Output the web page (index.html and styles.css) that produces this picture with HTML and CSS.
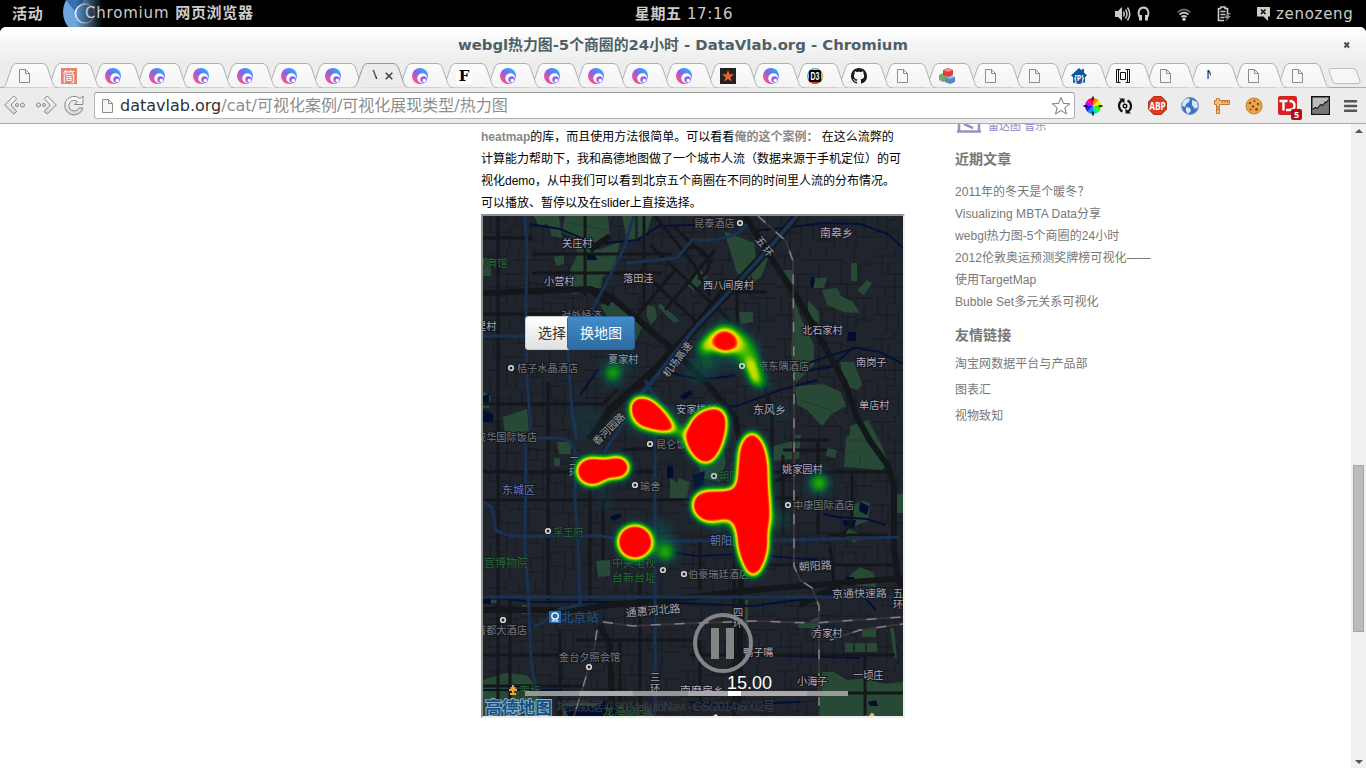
FILE: index.html
```html
<!DOCTYPE html>
<html lang="zh-CN">
<head>
<meta charset="utf-8">
<title>webgl热力图-5个商圈的24小时 - DataVlab.org</title>
<link rel="stylesheet" href="styles.css">
</head>
<body>
<svg class="defs" width="0" height="0" aria-hidden="true">
  <defs>
    <linearGradient id="orbFill" x1="1" y1="0" x2="0" y2="1"><stop offset=".15" stop-color="#27a8ff"/><stop offset=".5" stop-color="#8a62e8"/><stop offset=".85" stop-color="#ff4f8b"/></linearGradient>
    <linearGradient id="tabFill" x1="0" y1="0" x2="0" y2="1"><stop offset="0" stop-color="#fcfcfc"/><stop offset="1" stop-color="#f3f3f3"/></linearGradient>
    <linearGradient id="navFill" x1="0" y1="0" x2="0" y2="1"><stop offset="0" stop-color="#fff"/><stop offset="1" stop-color="#d4d4d4"/></linearGradient>
    <symbol id="page" viewBox="0 0 16 16"><path d="M2.500 1.500h6l4 4v9h-10zM8.500 1.500v4h4" fill="#f8f8f8" stroke="#8b8b8b"/></symbol>
    <symbol id="orb" viewBox="0 0 16 16"><circle cx="8" cy="8" r="8" fill="url(#orbFill)"/><circle cx="10.300" cy="10.300" r="5" fill="#fff"/><circle cx="11.600" cy="11.600" r="3.300" fill="#8f62e6"/><circle cx="12.300" cy="12.600" r="1.800" fill="#fff"/></symbol>
    <symbol id="jian" viewBox="0 0 16 16"><rect width="16" height="16" fill="#e78171"/><text x="8" y="13" text-anchor="middle" font-size="13" fill="#fff" class="cjk">简</text></symbol>
    <symbol id="eff" viewBox="0 0 16 16"><rect width="16" height="16" fill="#fff"/><text x="8" y="13" text-anchor="middle" font-size="15" class="serif">F</text></symbol>
    <symbol id="star" viewBox="0 0 16 16"><rect width="16" height="16" fill="#222"/><path d="M8 2l1.500 4.300 4.500.1-3.600 2.800 1.300 4.400L8 11l-3.700 2.600 1.300-4.400L2 6.400l4.500-.1z" fill="#e8622c"/></symbol>
    <symbol id="d3" viewBox="0 0 16 16"><circle cx="8" cy="8" r="7.300" fill="none" stroke="#3fa7c9" stroke-width="1.300"/><path d="M1.500 11a7.300 7.300 0 0 0 13 0" fill="none" stroke="#e53b2c" stroke-width="1.800"/><path d="M14.500 5a7 7 0 0 1 .5 5" fill="none" stroke="#e8b02c" stroke-width="1.500"/><rect x="2" y="2" width="12" height="12" rx="1.500"/><text x="8" y="11.700" text-anchor="middle" font-size="10" textLength="9" lengthAdjust="spacingAndGlyphs" fill="#fff" class="narrow">D3</text></symbol>
    <symbol id="github" viewBox="0 0 16 16"><path fill="#191717" d="M8 0C3.580 0 0 3.580 0 8c0 3.540 2.290 6.530 5.470 7.590.4.070.55-.17.55-.38 0-.19-.01-.82-.01-1.490-2.010.37-2.530-.49-2.690-.94-.09-.23-.48-.94-.82-1.130-.28-.15-.68-.52-.01-.53.63-.01 1.080.58 1.230.82.72 1.210 1.870.87 2.330.66.070-.52.28-.87.51-1.070-1.780-.2-3.640-.89-3.640-3.950 0-.87.31-1.590.82-2.150-.08-.2-.36-1.020.08-2.120 0 0 .67-.21 2.200.82.64-.18 1.320-.27 2-.27s1.360.09 2 .27c1.530-1.040 2.200-.82 2.200-.82.44 1.100.16 1.920.08 2.120.51.56.82 1.270.82 2.150 0 3.070-1.870 3.750-3.650 3.950.29.25.54.73.54 1.480 0 1.070-.01 1.930-.01 2.200 0 .21.15.46.55.38A8 8 0 0 0 16 8c0-4.420-3.580-8-8-8z"/></symbol>
    <symbol id="cubes" viewBox="0 0 16 16"><path d="M0 7l4-2 3 2v6l-3 1-4-2z" fill="#6fae6f"/><path d="M6 9l5-2 5 2v5l-5 2-5-2z" fill="#5b86c4"/><path d="M6 9l5-2 5 2-5 2z" fill="#9cbbe2"/><path d="M4 2l5-2 5 2v5l-5 2-5-2z" fill="#dc4040"/><path d="M4 2l5-2 5 2-5 2z" fill="#f48a84"/></symbol>
    <symbol id="house" viewBox="0 0 16 16"><path d="M8 0l3 2.600V1h2v3.500L16 7.500 14 9v5.500L8 16l-6-1.500V9L0 7.500z" fill="#0d56a0"/><text x="8" y="12.500" text-anchor="middle" font-size="9" textLength="10" lengthAdjust="spacingAndGlyphs" fill="#fff" class="bold">{P}</text></symbol>
    <symbol id="brackets" viewBox="0 0 16 16"><path d="M4 1.500H1.500v13H4M5.500 1.500h-2v13h2M12 1.500h2.500v13H12M10.500 1.500h2v13h-2M5.500 4.500h5v7h-5z" fill="none" stroke="#111"/></symbol>
  </defs>
</svg>

<header class="topbar">
  <div class="activities">活动</div>
  <div class="app">
    <svg class="app-logo" width="42" height="27" viewBox="0 0 42 27"><defs><linearGradient id="fade"><stop offset=".3" stop-color="#000" stop-opacity="0"/><stop offset=".95" stop-color="#000"/></linearGradient></defs><circle cx="24" cy="12" r="24" fill="#6fa5dd"/><path d="M3 0h18l-7 14z" fill="#376fae"/><circle cx="22" cy="13.500" r="9.500" fill="#5b93d3" stroke="#e8f0fa" stroke-width="1.600"/><rect width="42" height="27" fill="url(#fade)"/></svg>
    <span class="app-name"><span class="app-latin">Chromium</span> 网页浏览器</span>
  </div>
  <div class="clock"><b>星期五</b> 17:16</div>
  <div class="tray">
    <svg width="36" height="16" viewBox="0 0 36 16" fill="none" stroke="#ccc" stroke-width="1.500"><path d="M0 5h3l4-4v14l-4-4H0z" fill="#ccc" stroke="none"/><path d="M8.500 5.500q1.500 2.500 0 5M10.500 3.500q3 4.500 0 9M12.500 1.500q4.500 6.500 0 13"/><path d="M25 12c-3-5-1-10.500 3.500-10.500S35 7 32 12" stroke-width="1.800"/><path d="M25.500 9v5.500M31.500 9v5.500" stroke-width="3"/></svg>
    <svg width="16" height="16" viewBox="0 0 16 16" fill="none" stroke-width="1.700"><path d="M1.500 6.500q6.500-6 13 0" stroke="#666"/><path d="M3.500 8.700q4.500-4 9 0M5.500 11q2.500-2 5 0" stroke="#ccc"/><circle cx="8" cy="13.300" r="1.700" fill="#ccc"/></svg>
    <svg width="15" height="16" viewBox="0 0 15 16"><path d="M4 2.500V1h4v1.500h2.500V8M7 14.500H1.500v-12H4" fill="none" stroke="#ccc" stroke-width="1.600"/><path d="M3.500 5.500h5M3.500 8.500h5M3.500 11.500h4" stroke="#ccc" stroke-width="1.500"/><path d="M11 7l-4 5h3l-2 4 6-6h-3l3-3z" fill="#888"/></svg>
    <svg width="15" height="16" viewBox="0 0 15 16"><path d="M1 1h13v9.500h-2V15l-4.500-4.500H1z" fill="#ccc"/><path d="M5 3.500l4.500 4.500M9.500 3.500L5 8" stroke="#111" stroke-width="1.700"/></svg>
    <span class="user">zenozeng</span>
  </div>
</header>

<div class="window">
  <div class="titlebar">
    <span class="title">webgl热力图-5个商圈的24小时 - DataVlab.org - Chromium</span>
    <svg class="win-close" width="8" height="8" viewBox="0 0 8 8"><path d="M1.500 1.500l4.500 5M6 1.500l-4.500 5" stroke="#44545c" stroke-width="2.200"/></svg>
  </div>
  <nav class="tabs" id="tabs"></nav>
  <div class="toolbar">
    <svg class="nav" width="88" height="24" viewBox="0 0 88 24" fill="url(#navFill)" stroke="#858585"><path d="M0.700 12l9-9 3 2.500L7 12l5.700 6.500-3 2.500z"/><circle cx="13" cy="12" r="1.500"/><circle cx="18.500" cy="12" r="2"/><path d="M52.300 12l-9-9-3 2.500L46 12l-5.700 6.500 3 2.500z"/><circle cx="40" cy="12" r="1.500"/><circle cx="34.500" cy="12" r="2"/><path d="M79 3v8.500h-8.500l3-3a5.300 5.300 0 1 0 1.500 6.500h4a9.300 9.300 0 1 1-3-9.500z"/></svg>
    <div class="omnibox">
      <svg width="16" height="16"><use href="#page"/></svg>
      <span class="url"><b>datavlab.org</b>/cat/可视化案例/可视化展现类型/热力图</span>
      <svg width="20" height="20" viewBox="0 0 20 20"><path d="M10 1.500l2.400 6 6.400.3-5 4 1.700 6.200L10 14.500 4.500 18l1.700-6.200-5-4 6.400-.3z" fill="#fff" stroke="#777"/></svg>
    </div>
    <div class="extensions">
      <svg width="20" height="20" viewBox="0 0 20 20"><g transform="translate(10 10)"><path d="M0 0V-8A8 8 0 0 1 5.700-5.700z" fill="#ff8a00"/><path d="M0 0L5.700-5.700A8 8 0 0 1 8 0z" fill="#e6f000"/><path d="M0 0H8A8 8 0 0 1 5.700 5.700z" fill="#30f000"/><path d="M0 0L5.700 5.700A8 8 0 0 1 0 8z" fill="#00e8b0"/><path d="M0 0V8A8 8 0 0 1-5.700 5.700z" fill="#0090ff"/><path d="M0 0L-5.700 5.700A8 8 0 0 1-8 0z" fill="#2020ff"/><path d="M0 0H-8A8 8 0 0 1-5.700-5.700z" fill="#d000ff"/><path d="M0 0L-5.700-5.700A8 8 0 0 1 0-8z" fill="#ff0050"/><path d="M0-9.500v4M0 9.500v-4M-9.500 0h4M9.500 0h-4" stroke="#000" stroke-width="1.500"/></g></svg>
      <svg width="16" height="18" viewBox="0 0 16 18" fill="none" stroke="#111" stroke-width="2.200"><path d="M5 3.500A6.300 6.300 0 0 0 5.500 14.500M11 14.500A6.300 6.300 0 0 0 10.500 3.500"/><path d="M2 1.500h5.500v5zM14 16.500H8.500v-5z" fill="#111" stroke="none"/><circle cx="8" cy="9" r="1.800" stroke-width="1.400"/></svg>
      <svg width="19" height="19" viewBox="0 0 19 19"><path d="M5.700.5h7.600l5.200 5.200v7.600l-5.200 5.200H5.700L.5 13.300V5.700z" fill="#d93a20" stroke="#b8301a"/><text x="9.500" y="13.500" text-anchor="middle" font-size="11" textLength="16.500" lengthAdjust="spacingAndGlyphs" fill="#fff" class="bold">ABP</text></svg>
      <svg width="18" height="18" viewBox="0 0 18 18"><circle cx="9" cy="9" r="8.500" fill="#3d73c4" stroke="#7f96bd"/><path d="M2 4q4-4 7-2l-1 3-3 2-1 3-3-1zM11 3l5 2 1 5-3 2-3-4zM5 10l4 1 1 3-3 3-2-3z" fill="#dbe6f5"/></svg>
      <svg width="18" height="18" viewBox="0 0 18 18"><path d="M3.500 1.500h3v2h10v4h-10v9h-3v-9h-2v-4h2z" fill="#f1bd7b" stroke="#c57a36"/><path d="M9.500 4v1.500M12 4v1.500M14.500 4v1.500M4 10h1.500M4 12.500h1.500" stroke="#8d5522"/></svg>
      <svg width="18" height="18" viewBox="0 0 18 18"><circle cx="9" cy="9" r="8" fill="#e9a54b" stroke="#c57f2b"/><g fill="#8a4a16"><circle cx="5" cy="6" r="1.200"/><circle cx="9.500" cy="4" r="1"/><circle cx="13" cy="7" r="1.300"/><circle cx="8" cy="9.500" r="1.200"/><circle cx="5.500" cy="12.500" r="1.100"/><circle cx="11.500" cy="12.500" r="1.400"/></g></svg>
      <svg width="24" height="24" viewBox="0 0 24 24"><rect x="0" y="0" width="19" height="19" rx="2" fill="#d92020"/><path d="M1.500 5h8M5.500 5v9.500M8 14h3.500q5 0 5-4.500t-5-4.500" fill="none" stroke="#fff" stroke-width="2.400"/><rect x="13" y="13" width="11" height="11" rx="2" fill="#b30c12"/><text x="18.500" y="22" text-anchor="middle" font-size="9" fill="#fff" class="bold">5</text></svg>
      <svg width="19" height="19" viewBox="0 0 19 19"><rect x=".75" y=".75" width="17.500" height="17.500" fill="#b9bcbf" stroke="#111" stroke-width="1.500"/><path d="M1.500 13.500l3-2 2 1 3-4 2 1 3-3.500 1 .5 2-3V17.500H1.500z" fill="#777"/><path d="M1.500 13.500l3-2 2 1 3-4 2 1 3-3.500 1 .5 2-3" fill="none" stroke="#222" stroke-width="1.200"/></svg>
      <svg width="14" height="14" viewBox="0 0 14 14"><path d="M1 2.200h11M1 7h11M1 11.800h11" stroke="#555" stroke-width="2.600" stroke-linecap="round"/></svg>
    </div>
  </div>
</div>

<div class="viewport">
  <main class="article">
    <p><a>heatmap</a>的库，而且使用方法很简单。可以看看<a>俺的这个案例：</a> 在这么流弊的<br>计算能力帮助下，我和高德地图做了一个城市人流（数据来源于手机定位）的可<br>视化demo，从中我们可以看到北京五个商圈在不同的时间里人流的分布情况。<br>可以播放、暂停以及在slider上直接选择。</p>
    <div class="map">
      <svg width="420" height="500" viewBox="483 216 420 500">
        <defs>
          <pattern id="streets" width="97" height="83" patternUnits="userSpaceOnUse"><path d="M0 7h22v-7M9 7v18h34V11h22l6 4h26M22 25v29h-8v29M0 38h31l12-3h54M43 25v20h15v38M31 38v18l-6 6v21M12 38v9h10M43 34h9v11M34 11V0M26 11h17M15 12v13M50 0v11M65 11v24M78 0v15M84 15v20M71 35v14h26M58 54h22v29M0 66h25M31 60h27M66 54v14h14M88 49v22h9M80 71h8M37 60v14h21M5 47v19M46 60v14M71 68v15" fill="none" stroke="#14171c" stroke-width=".8"/></pattern>
          <filter id="heat" x="483" y="216" width="420" height="500" filterUnits="userSpaceOnUse" color-interpolation-filters="sRGB">
            <feGaussianBlur stdDeviation="4.300"/>
            <feColorMatrix values="0 0 0 1 0 0 0 0 1 0 0 0 0 1 0 0 0 0 1 0"/>
            <feComponentTransfer>
              <feFuncR type="table" tableValues="0 0 0 .15 .7 1 1 1 1 1 1"/>
              <feFuncG type="table" tableValues=".4 .45 .6 .72 .85 .85 .2 0 0 0 0"/>
              <feFuncB type="table" tableValues=".5 .4 .1 0 0 0 0 0 0 0 0"/>
              <feFuncA type="table" tableValues="0 .3 .7 .95 1 1 1 1 1 1 1"/>
            </feComponentTransfer>
          </filter>
        </defs>
        <rect x="483" y="216" width="420" height="500" fill="#20242c"/>
        <rect x="483" y="216" width="420" height="500" fill="url(#streets)"/>
        <g fill="#284936">
          <path d="M534 216h25l3 22-10-2-4-12-9 2zM565 216h43l2 22-14 6 2 6 22-8-6 26-14 12-10-4-3 10-10 8-8-1v-20l8-18-2-17-13-6z"/>
          <path d="M622 216h13v26l-8-2zM638 216h14l-6 20-8 2zM554 257l10-3v10l-8 2zM582 274h11l10-4-2 18-18 0zM483 258h8v18h-8zM647 305l8 2 2 10-6 8-4-8zM600 305l16-4 14 12 12 14-6 14-20-10z"/>
          <path d="M724 231l30 12 3 22-8 14-12-6zM700 270l8 6-14 15-6-5zM752 258h16l-6 18-10 8zM780 270h14l-2 20zM739 312h14v10l-12 2zM815 278h12l-3 10h-12zM822 290l15-2 4 8 12 6 7 11-17-1-16-7zM851 263h6v18h-6zM857 290l10-10 5 3-8 12zM808 300l10 10 2 14-12-8zM794 300l8 20 12 25v20l-18 18-5-30z"/>
          <path d="M840 362h14l8 22-4 6-14-4zM795 386l28-2 18 8 5 14-14 8-10 12-15-16-10-5zM850 426l18-6 12 22 8 20-6 8-38-3 2-30 4-2zM827 448l10 2-2 8-9-2zM795 435h6l-2 24h-5z"/>
          <path d="M770 447l22-6v18l-20 2zM700 412l8-4 10 14 8 40-6 20-18-4-4-14zM678 478l12 4-4 20-8-2zM670 478l16 10-2 12-14-2zM503 417l24-8 2 22-8 6-16-2zM557 442h14v12h-12zM554 458h6v8h-6zM483 392l8 4-2 12h-6z"/>
          <path d="M596 561l14-1v16l-12 1zM483 600h15v3h-15zM522 605h5v9h-5zM483 680l22-7 22 2 12 16 0 25h-56zM565 703h48l14 8 20-4 8 9H562zM822 672h12l14 8 20-2 14 6 21-2v34h-84zM850 575l10-8 14 6 2 14-26-2zM852 505l10-4 8 2-2 18-16 6zM862 629h14v8h-14zM845 643h8v9h-8zM855 643h10v9h-10zM867 643h10v9h-10zM869 683h16v8h-16zM896 495l7-2v20h-7zM842 533l6-4 14 6-8 8z"/>
          <path d="M727 340h14v8h-10zM525 340v6h40v-3h-36zM660 303l20 18-6 2-16-16zM745 600h3v30h-3zM811 620l8-4v24l-8-4zM798 624h14v4h-14zM890 628l4 0 3 30-3 0z"/>
        </g>
        <g fill="none" stroke="#203a2c" stroke-width="1"><path d="M495 684q14-6 24 2l6 28M490 694q10-8 20 0M800 400l30 10 16 20M845 440h36M852 452a8 8 0 1 0 1 0M566 222l40 8M576 250l34 8"/></g>
        <g fill="#020d30"><path d="M587 254h8l2 6h-10zM483 396l6-2v10l-6-2zM483 410l10 4 0 8h-10zM667 466h6v12h-6zM610 517l10-4 2 4-9 4zM848 332h8v9h-9zM815 278l-2 12-3-6 2-8zM680 396l10-6 2 4-8 6zM845 577h9l2 8-6 1zM860 502l9 4-2 9-8-4zM842 520h14l-2 8-10-2zM564 706h30l14-6 12 8-2 8h-50zM693 475l12-4-2 14-8 8zM868 702l8-2 2 6h-8zM483 596h8v8h-8z"/></g>
        <g fill="none" stroke="#05103a" stroke-width="2">
          <path d="M530 224l30 5 35 15 42-4 22-14 36-1M750 231l24-2 50-6 36 1 28 10 15 14M483 470q8 4 14 0M808 363l30-10 18-5 24 4 23 12M800 372l30-5 20-16M690 415l50-10 40-15 38-10M665 370q30 14 70 5"/>
          <path d="M580 395l10-14 8-12M622 450l90-6M823 514l14 3 30 2 18 6M483 596l50 6h120l100 4 60-8 45-8 18 20M483 690h80M760 655l100 3M660 550l36 6 50-2 72 6M690 702l30 3 80-3"/>
        </g>
        <g fill="none" stroke="#13171a" stroke-width="3">
          <path d="M483 238h50M532 254h140M532 273h130M483 314h90M498 216v180M498 395v320M548 382v220M644 216v90M655 216l40 50 15 30M483 404h120l15-15M483 472h175M483 500h176l140-2M660 406v40M585 216v80M737 290v50M737 292h30M483 655h100M483 686h100M510 600v116M560 630v86M575 640h120M620 640v76M640 580v136M622 450l80-5M700 640v70M734 470v246"/>
          <path d="M640 270l60 55M650 245l40 38 40 38M672 225l40 38M665 310l50-60M690 330l40-50M625 330l50-60M680 255q16-16 26 0q8 16-8 24M783 455v80M818 440v95M840 540l12-20V470M790 440h40M783 450h44M765 485l45-18M770 472h120M690 655h205M740 565h160M700 540v50M830 545l4 40M828 535h60M865 655v60M845 693h58M762 380l10 30v60l0 75M590 460v140M603 500v60"/>
        </g>
        <g fill="none" stroke="#13171a" stroke-width="6"><path d="M483 293l107-4 20 7 60 51 40 40 25 30 6 30v120l-2 140M590 290l20 14M745 216l25 40 30 46 30 54 15 27 12 34 13 24 18 25 6 20v60l3 30 10 22M590 250l20-14M600 625l10 20 2 60M483 610h100l20-4 100-10 50-6 150-12M800 605l40-20"/></g>
        <path d="M590 440l20-30 45-40 40-42 60-64 42-48" fill="none" stroke="#13171a" stroke-width="8"/>
        <g fill="none" stroke="#193253" stroke-width="3">
          <path d="M525 216l2 34-1 60 1 70 4 50M526 440l-1 110 3 40 3 70 5 30 15 26M634 216l-10 32-14 28-20 38M626 263l51-5 17-20M483 336h45M568 352q-2-16 10-22M568 352l4 60 5 28M483 438h74q15 0 18 14l0 50 3 40 2 63-20 4-18 14-8 3M483 502l9 5 4 24 14 5 90 0 44 6 30-1h80l80-2 66-2M483 597h420M655 420v296M695 240q40 2 52-16M645 380q10 20 25 30M604 452l20-30"/>
          <path d="M640 396l55-68 60-64 42-48" stroke-width="4"/>
        </g>
        <g fill="none" stroke="#3d3335" stroke-width="2"><path id="railA" d="M758 216l28 25 7 20 1 120v185l6 14 12 8 7 18v100"/><path id="railB" d="M603 622l30 4 40-2 80-3 60 2 90-6M597 630l-3 20-12 40-8 26M830 640l30-10 43-6"/></g>
        <g fill="none" stroke="#80808c" stroke-width="1.500" stroke-dasharray="10 14"><use href="#railA"/><use href="#railB"/></g>

        <g class="labels">
          <text x="562" y="247">关庄村</text><text x="544" y="285">小营村</text><text x="623" y="282">落田洼</text><text x="703" y="289">西八间房村</text><text x="820" y="237" class="wide">南皋乡</text><text x="802" y="334">北石家村</text><text x="856" y="366">南岗子</text><text x="859" y="409">单店村</text><text x="753" y="414" class="wide">东风乡</text><text x="676" y="413">安家楼村</text><text x="782" y="473">姚家园村</text><text x="608" y="363">夏家村</text><text x="476" y="330">里村</text><text x="812" y="637">方家村</text><text x="743" y="656">鸭子嘴</text><text x="797" y="685">小海子</text><text x="853" y="679">一顷庄</text><text x="680" y="695" class="wide">南磨房乡</text>
        </g>
        <g class="labels dim">
          <text x="561" y="319">对外经济</text><text x="694" y="227">昆泰酒店</text><text x="517" y="372">桔子水晶酒店</text><text x="748" y="370">北京东隅酒店</text><text x="476" y="441">汉华国际饭店</text><text x="656" y="448">昆仑饭店</text><text x="640" y="490">瑜舍</text><text x="793" y="509">中康国际酒店</text><text x="688" y="578">伯豪瑞廷酒店</text><text x="559" y="661">金台夕照会馆</text><text x="476" y="634">首都大酒店</text>
        </g>
        <g class="labels road">
          <text transform="translate(762 242) rotate(50)" x="-6" y="4">五</text><text transform="translate(769 252) rotate(50)" x="-6" y="4">环</text><text transform="translate(668 378) rotate(-53)">机场高速</text><text transform="translate(597 446) rotate(-45)">香河园路</text><text x="569" y="465">二</text><text x="569" y="476">环</text><text transform="translate(626 617) rotate(-5)" class="wide">通惠河北路</text><text transform="translate(799 571) rotate(-4)" class="wide">朝阳路</text><text transform="translate(832 598) rotate(-1)" class="wide">京通快速路</text><text x="893" y="597">五</text><text x="893" y="608">环</text><text x="733" y="616">四</text><text x="733" y="627">环</text><text x="650" y="681">三</text><text x="650" y="692">环</text>
        </g>
        <g class="labels green"><text x="477" y="267">体育馆</text><text x="553" y="536">孚王府</text><text x="484" y="567" class="wide">宫博物院</text><text x="612" y="567" class="wide">中央电视</text><text x="612" y="582" class="wide">台新台址</text><text x="519" y="695" class="wide">天坛</text><text x="603" y="715" class="wide">龙潭公园</text><text x="719" y="480">朝阳</text></g>
        <g class="labels district"><text x="502" y="494">东城区</text><text x="710" y="545">朝阳区</text></g>
        <text x="561" y="622" class="station">北京站</text>
        <rect x="549" y="611" width="12" height="12" fill="#2a6bb0"/><path d="M552.500 621l2-3M557.500 621l-2-3M551.500 621h7" stroke="#fff"/><circle cx="555" cy="616" r="3.200" fill="none" stroke="#fff" stroke-width="1.300"/>
        <text x="557" y="711" class="notice" textLength="218">地图数据 © 2014 AutoNavi - GS(2014)6002号</text>
        <text x="485" y="714" class="brand">高德地图</text>
        <g fill="#222" stroke="#d9d9d9" stroke-width="1.600"><circle cx="740" cy="223" r="2.300"/><circle cx="511" cy="368" r="2.300"/><circle cx="650" cy="444" r="2.300"/><circle cx="635" cy="485" r="2.300"/><circle cx="714" cy="476" r="2.300"/><circle cx="788" cy="505" r="2.300"/><circle cx="548" cy="531" r="2.300"/><circle cx="663" cy="570" r="2.300"/><circle cx="684" cy="574" r="2.300"/><circle cx="503" cy="620" r="2.300"/><circle cx="589" cy="667" r="2.300"/></g>
        <path d="M509 690h8M513 685v10M510.500 688h5M510 694h6" stroke="#f0a030" stroke-width="2"/><path d="M869 716l2-3 2 0 2 3z" fill="#f0b030"/><path d="M713 716l3-2 2 2z" fill="#eee"/>

        <g filter="url(#heat)">
          <g fill-opacity=".1"><ellipse cx="728" cy="350" rx="34" ry="20"/><ellipse cx="700" cy="370" rx="15" ry="13"/><ellipse cx="612" cy="372" rx="13" ry="16"/><circle cx="662" cy="530" r="10"/><ellipse cx="728" cy="523" rx="22" ry="10"/><ellipse cx="778" cy="520" rx="11" ry="10"/><circle cx="628" cy="362" r="8"/><circle cx="819" cy="484" r="13"/><circle cx="666" cy="550" r="14"/><ellipse cx="652" cy="420" rx="28" ry="16"/></g>
          <g fill-opacity=".05"><circle cx="587" cy="422" r="16"/><circle cx="604" cy="500" r="10"/><circle cx="782" cy="412" r="10"/><ellipse cx="706" cy="480" rx="14" ry="10"/></g>
          <g fill-opacity=".24"><circle cx="613" cy="373" r="7"/><circle cx="819" cy="483" r="8.500"/><circle cx="665" cy="552" r="8.500"/><path d="M697 352l8-18 16-13 16 4 14 16 10 20 8 24-4 6-12-4-10-24-12-12-22 0z"/></g>
          <path d="M668 426l22 12" stroke="#000" stroke-opacity=".3" stroke-width="11" fill="none"/>
          <path d="M750 364q2 8 5 16" stroke="#000" stroke-opacity=".4" stroke-width="9" fill="none" stroke-linecap="round"/>
          <path d="M707 347q7-8 16-10l14 8" stroke="#000" stroke-opacity=".24" stroke-width="13" fill="none" stroke-linecap="round"/>
          <ellipse cx="725" cy="341.500" rx="10" ry="10" fill-opacity=".95"/>
          <path d="M631 405C632 396 645 395 654 402C661 408 671 420 673 428C668 435 654 429 644 427C634 424 630 412 631 405zM709 409C722 405 728 414 726 428C724 444 716 463 706 463C698 463 694 456 689 449C684 441 687 427 693 419C698 413 702 411 709 409zM577 471C577 463 584 458 592 458C600 458 604 461 611 458C620 455 629 460 629 467C629 476 620 479 613 478C606 476 602 485 592 485C584 485 577 479 577 471zM618 542A17 16.500 0 1 1 652 542A17 16.500 0 1 1 618 542z"/>
          <path d="M752 433C763 436 768 455 768 470C768 490 770 500 770 508C770 520 767 530 768 545C767 560 759 576 753 576C747 576 738 555 737 540C737 530 735 520 728 519C720 518 712 524 703 520C690 514 689 497 702 492C715 490 730 492 735 488C738 480 738 465 739 455C740 445 744 435 752 433z"/>
        </g>
        <circle cx="742" cy="366" r="2.300" fill="#1d4a30" stroke="#c9e0cc" stroke-width="1.500"/>
      </svg>
      <div class="map-buttons"><button class="btn">选择</button><button class="btn primary">换地图</button></div>
      <svg class="pause" width="60" height="60" viewBox="0 0 60 60"><circle cx="30" cy="30" r="28" fill="none" stroke="#828486" stroke-width="4"/><path d="M18 15h8v31h-8zM33 15h8v31h-8z" fill="#828486"/></svg>
      <div class="hour">15.00</div>
      <div class="slider"><span></span><span></span><span></span><span></span><i></i><span></span><span></span></div>
    </div>
  </main>
  <aside class="sidebar">
    <div class="tags"><svg width="26" height="10" viewBox="0 0 26 10"><path d="M4 0v7.500h20V0M2 7.500h24M9 0l9 4" fill="none" stroke="#9b8fc4" stroke-width="2.500"/></svg><span>雷达图 音乐</span></div>
    <h3>近期文章</h3>
    <ul>
      <li>2011年的冬天是个暖冬？</li><li>Visualizing MBTA Data分享</li><li>webgl热力图-5个商圈的24小时</li><li>2012伦敦奥运预测奖牌榜可视化——<br>使用TargetMap</li><li>Bubble Set多元关系可视化</li>
    </ul>
    <h3 class="links-title">友情链接</h3>
    <ul class="links"><li>淘宝网数据平台与产品部</li><li>图表汇</li><li>视物致知</li></ul>
  </aside>
  <div class="scrollbar">
    <svg width="8" height="4" viewBox="0 0 8 4"><path d="M4 0l4 4H0z" fill="#555"/></svg>
    <div class="thumb"></div>
    <svg width="8" height="4" viewBox="0 0 8 4"><path d="M4 4l4-4H0z" fill="#555"/></svg>
  </div>
</div>
<script src="tabs.js"></script>
</body>
</html>
```
FILE: styles.css
```css
* { box-sizing: border-box; }
body { margin: 0; width: 1366px; height: 768px; overflow: hidden; background: #000; font-family: "Liberation Sans", "Noto Sans CJK SC", sans-serif; }
svg { display: block; flex: none; }
.defs { position: absolute; }
.cjk { font-family: "Noto Sans CJK SC", sans-serif; }
.serif { font-family: "DejaVu Serif", serif; font-weight: bold; }
.narrow { font-family: "Liberation Sans", sans-serif; font-weight: bold; }
.bold { font-family: "Open Sans", sans-serif; font-weight: bold; }

.topbar { position: relative; height: 27px; display: flex; align-items: center; padding: 0 12px; color: #ccc; font: 500 15px/26px "DejaVu Sans", "Noto Sans CJK SC", sans-serif; background: #000; }
.activities { width: 51px; font-weight: bold; letter-spacing: .7px; }
.app { display: grid; flex: 1; }
.app > * { grid-area: 1 / 1; }
.app-name { padding-left: 22px; z-index: 1; font-weight: bold; letter-spacing: .7px; white-space: nowrap; }
.app-latin { font-weight: normal; letter-spacing: .8px; }
.clock { position: absolute; left: 0; width: 1366px; padding-left: 2px; text-align: center; letter-spacing: .6px; }
.tray { display: flex; align-items: center; width: 239px; }
.tray svg + svg { margin-left: 25px; }
.tray svg:nth-child(4) { margin-left: 24px; }
.user { margin-left: 5px; letter-spacing: .7px; }

.window { background: #ececec; border-radius: 6px 6px 0 0; overflow: hidden; }
.titlebar { height: 36px; display: flex; align-items: center; padding: 0 15px 0 458px; background: linear-gradient(#fff, #ececec); }
.title { flex: 1; font: bold 14.850px/36px "DejaVu Sans", "Noto Sans CJK SC", sans-serif; color: #4e5f67; white-space: nowrap; }
.tabs { position: relative; height: 25px; display: flex; padding-left: .3px; border-bottom: 1px solid #aaa; }
.tab { position: relative; flex: none; width: 43.900px; height: 25px; display: grid; }
.tab > * { grid-area: 1 / 1; }
.tab-shape { width: 58px; height: 25px; overflow: visible; }
.tab-icon { margin: 5px 0 0 17px; }
.tab-text { margin: 4px 0 0 21px; width: 5px; overflow: hidden; font: 12px/16px "DejaVu Sans", sans-serif; color: #333; }
.tab-close { margin: 9px 0 0 34px; }
.tab-new { margin: 5px 0 0 11px; }

.toolbar { height: 36px; display: flex; align-items: center; padding: 0 8px 0 4px; border-bottom: 1px solid #aaa; background: #ececec; }
.nav { margin-top: -2px; }
.omnibox { width: 981px; height: 27px; margin-left: 2px; display: flex; align-items: center; padding: 0 3px 0 5px; background: #fff; border: 1px solid #b4b4b4; border-top-color: #999; border-radius: 3px; }
.url { flex: 1; padding-left: 4px; font: 16px/24px "DejaVu Sans", "Noto Sans CJK SC", sans-serif; color: #8d8d8d; white-space: nowrap; }
.url b { color: #303030; font-weight: normal; }
.extensions { flex: 1; display: flex; align-items: center; justify-content: space-between; padding-left: 8px; }
.extensions svg:nth-child(7) { margin: 5px -5px 0 0; }

.viewport { height: 644px; display: flex; background: #fff; overflow: hidden; }
.article { width: 424px; margin-left: 481px; flex: none; }
.article p { margin: 2px 0 0; font-size: 12px; line-height: 22px; color: #000; white-space: nowrap; }
.article a { color: #888; font-weight: bold; }
.map { position: relative; width: 424px; height: 504px; border: 2px solid; border-color: #8f9290 #eee #eee #8f9290; overflow: hidden; }
.labels { font: 10.200px "Noto Sans CJK SC", sans-serif; fill: #b6a8bf; stroke: #14171c; stroke-width: 2px; paint-order: stroke; }
.wide { font-size: 11px; }
.dim { fill: #75777e; }
.road { fill: #a0a3ae; }
.green { fill: #2a6a3a; stroke-width: 1px; }
.district { fill: #6577b8; font-size: 11px; }
.station { font: 12.500px "Noto Sans CJK SC", sans-serif; fill: #1f5496; }
.notice { font: 12px "Liberation Sans", "Noto Sans CJK SC", sans-serif; fill: #3a3d42; }
.brand { font: bold 16.800px "Noto Sans CJK SC", sans-serif; fill: #16507f; stroke: #8fb2cc; stroke-width: 1.800px; paint-order: stroke; }
.map-buttons { position: absolute; left: 42px; top: 100px; display: flex; }
.btn { width: 68px; height: 34px; padding: 0 0 0 12px; margin-right: -26px; text-align: left; font: 14px/30px "Liberation Sans", "Noto Sans CJK SC", sans-serif; color: #333; border: 1px solid #ccc; border-radius: 3px; background: linear-gradient(#fff, #e0e0e0); }
.primary { color: #fff; border-color: #2b669a; background: linear-gradient(#428bca, #2d6ca2); }
.pause { position: absolute; left: 210px; top: 397px; }
.hour { position: absolute; left: 244px; top: 456px; font-size: 18px; line-height: 22px; color: #fff; }
.slider { position: absolute; left: 42px; top: 475px; width: 323px; height: 5px; display: flex; }
.slider span { flex: 54; background: #969696; }
.slider span:nth-child(even) { background: #aaa; }
.slider span:nth-child(4) { flex: 40; }
.slider i { width: 13px; background: #fff; }
.slider span:nth-child(6) { flex: 66; background: #aaa; }
.slider span:nth-child(7) { flex: 41; background: #999; }

.sidebar { flex: 1; padding-left: 50px; font-size: 12px; line-height: 22px; color: #777; letter-spacing: .05px; }
.tags { height: 10px; display: flex; gap: 7px; color: #9084c8; font-size: 11px; line-height: 5px; }
.sidebar h3 { margin: 14px 0 0; font-size: 14px; line-height: 22px; font-weight: bold; color: #777; }
.sidebar ul { list-style: none; margin: 11px 0 0; padding: 0; }
.sidebar .links-title { margin-top: 11px; }
.sidebar .links { margin-top: 5px; line-height: 26px; }
.scrollbar { width: 15px; background: #f0f0f0; display: flex; flex-direction: column; align-items: center; padding: 5px 0 4px; }
.thumb { width: 11px; height: 167px; margin: 332px 0 auto; background: #bbb; border: 1px solid #a5a5a5; }
```
FILE: tabs.js
```js
const icons = ['page', 'jian', 'orb', 'orb', 'orb', 'orb', 'orb', 'orb', null, 'orb', 'eff', 'orb', 'orb', 'orb', 'orb', 'orb', 'star', 'orb', 'd3', 'github', 'page', 'cubes', 'page', 'page', 'house', 'brackets', 'page', 'N', 'page', 'page'];
const outline = 'M1 24.500C5 24.500 5.500 22 7 18L11.500 5Q13 .5 17 .5H42Q46 .5 47.500 5L52 18C53.500 22 54 24.500 58 24.500';

document.getElementById('tabs').innerHTML = icons.map((icon, i) => {
  const active = icon === null;
  let content = `<svg class="tab-icon" width="16" height="16"><use href="#${icon}"/></svg>`;
  if (active) {
    content = '<span class="tab-text">V</span><svg class="tab-close" width="8" height="8" viewBox="0 0 8 8"><path d="M.7.7l6.600 6.600M7.300.7L.7 7.300" stroke="#444" stroke-width="1.600"/></svg>';
  } else if (icon === 'N') {
    content = '<span class="tab-text">N</span>';
  }
  const fill = active ? '#ececec' : 'url(#tabFill)';
  const stroke = active ? '#999' : '#b0b0b0';
  const base = active ? `<path d="M1 25.500H58" stroke="#ececec" stroke-width="2"/>` : '';
  return `<div class="tab" style="z-index:${active ? 50 : 40 - i}"><svg class="tab-shape"><path d="${outline}" fill="${fill}" stroke="${stroke}"/>${base}</svg>${content}</div>`;
}).join('') + '<svg class="tab-new" width="33" height="17" viewBox="0 0 33 17"><path d="M3 .5H25Q27.500 .5 28.500 3L32 13Q32.500 15.500 30 15.500H8Q5.500 15.500 4.500 13L1 3Q.5 .5 3 .5z" fill="#f6f6f6" stroke="#bbb"/></svg>';
```
